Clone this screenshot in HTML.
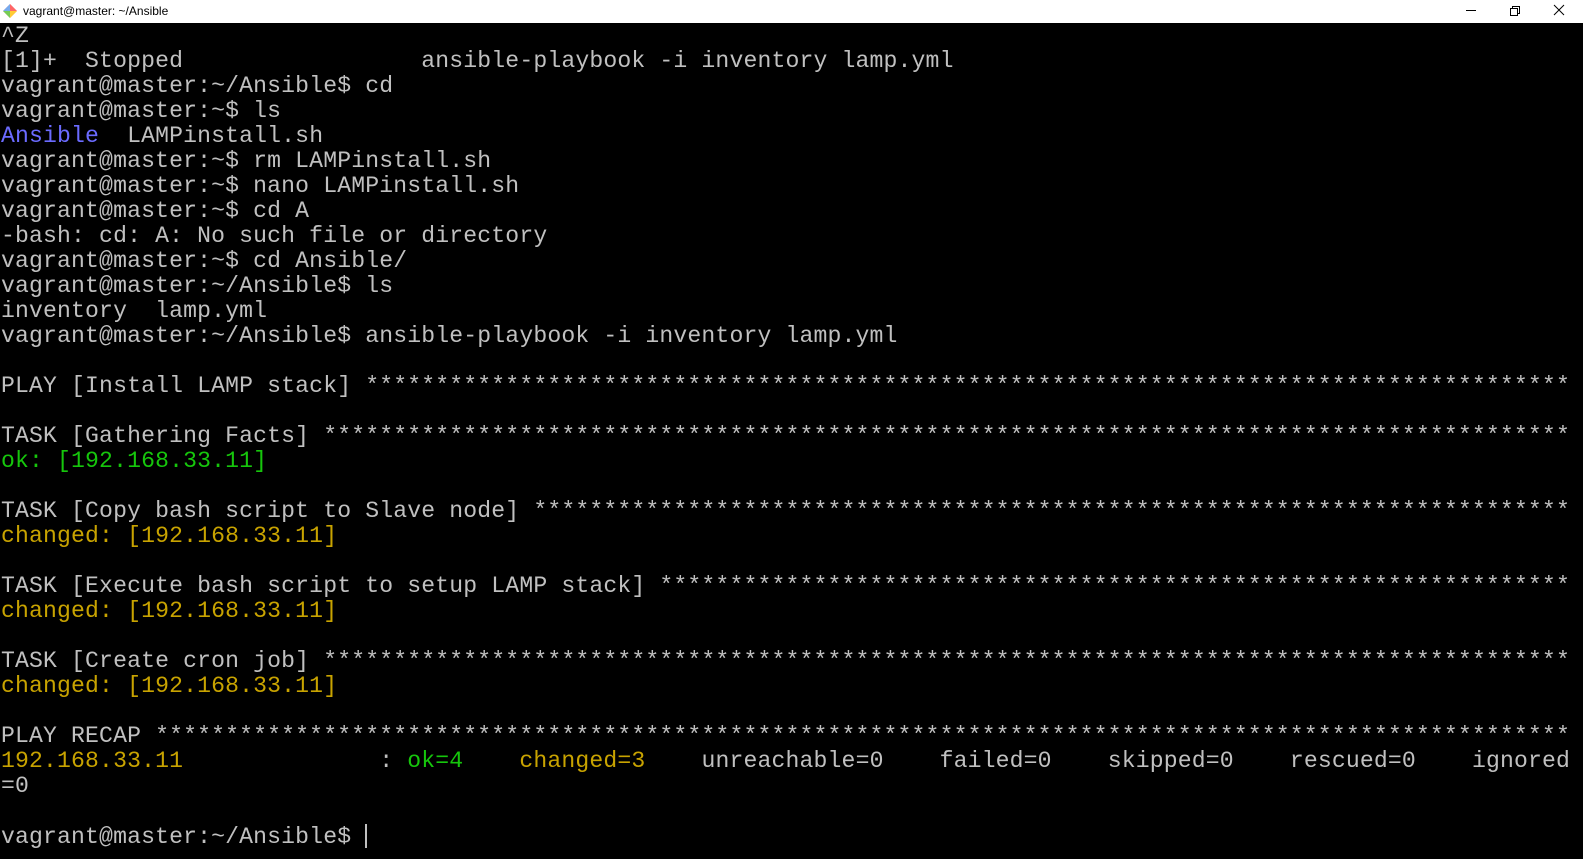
<!DOCTYPE html>
<html><head><style>
html,body{margin:0;padding:0;width:1583px;height:859px;overflow:hidden;background:#000}
.tb{position:absolute;left:0;top:0;width:1583px;height:23px;background:#fff;font:12px "Liberation Sans",sans-serif;color:#000}
.tb .t{position:absolute;left:23px;top:4px}
.term{position:absolute;left:1px;top:24px;width:1583px;font-family:"Liberation Mono",monospace;font-size:23.1px;letter-spacing:0.15px;line-height:25px;color:#c0c0c0;white-space:pre}
.b{color:#6b6bff}.g{color:#16c60c}.y{color:#c8a300}
</style></head><body>
<div class="tb">
<svg style="position:absolute;left:2px;top:3px" width="16" height="16" viewBox="0 0 16 16"><path d="M8 1 L15 8 L8 15 L1 8Z" fill="#e9a"/><path d="M8 1 L15 8 L8 8Z" fill="#f66"/><path d="M1 8 L8 8 L8 15Z" fill="#7c5"/><path d="M8 8 L15 8 L8 15Z" fill="#fc3"/><path d="M1 8 L8 1 L8 8Z" fill="#7ae"/></svg>
<span class="t">vagrant@master: ~/Ansible</span>
<svg style="position:absolute;left:1460px;top:0" width="123" height="23"><line x1="6" y1="10.5" x2="16" y2="10.5" stroke="#000"/><rect x="50.5" y="8.5" width="7" height="7" fill="none" stroke="#000"/><path d="M52.5 8.5V6.5H59.5V13.5H57.5" fill="none" stroke="#000"/><path d="M94 5L104 15M104 5L94 15" stroke="#000"/></svg>
</div>
<div class="term">^Z
[1]+  Stopped                 ansible-playbook -i inventory lamp.yml
vagrant@master:~/Ansible$ cd
vagrant@master:~$ ls
<span class="b">Ansible</span>  LAMPinstall.sh
vagrant@master:~$ rm LAMPinstall.sh
vagrant@master:~$ nano LAMPinstall.sh
vagrant@master:~$ cd A
-bash: cd: A: No such file or directory
vagrant@master:~$ cd Ansible/
vagrant@master:~/Ansible$ ls
inventory  lamp.yml
vagrant@master:~/Ansible$ ansible-playbook -i inventory lamp.yml

PLAY [Install LAMP stack] **************************************************************************************

TASK [Gathering Facts] *****************************************************************************************
<span class="g">ok: [192.168.33.11]</span>

TASK [Copy bash script to Slave node] **************************************************************************
<span class="y">changed: [192.168.33.11]</span>

TASK [Execute bash script to setup LAMP stack] *****************************************************************
<span class="y">changed: [192.168.33.11]</span>

TASK [Create cron job] *****************************************************************************************
<span class="y">changed: [192.168.33.11]</span>

PLAY RECAP *****************************************************************************************************
<span class="y">192.168.33.11</span>              : <span class="g">ok=4</span>    <span class="y">changed=3</span>    unreachable=0    failed=0    skipped=0    rescued=0    ignored
=0

vagrant@master:~/Ansible$ <span style="display:inline-block;width:2px;height:24px;background:#c0c0c0;vertical-align:-5px"></span></div>
</body></html>
